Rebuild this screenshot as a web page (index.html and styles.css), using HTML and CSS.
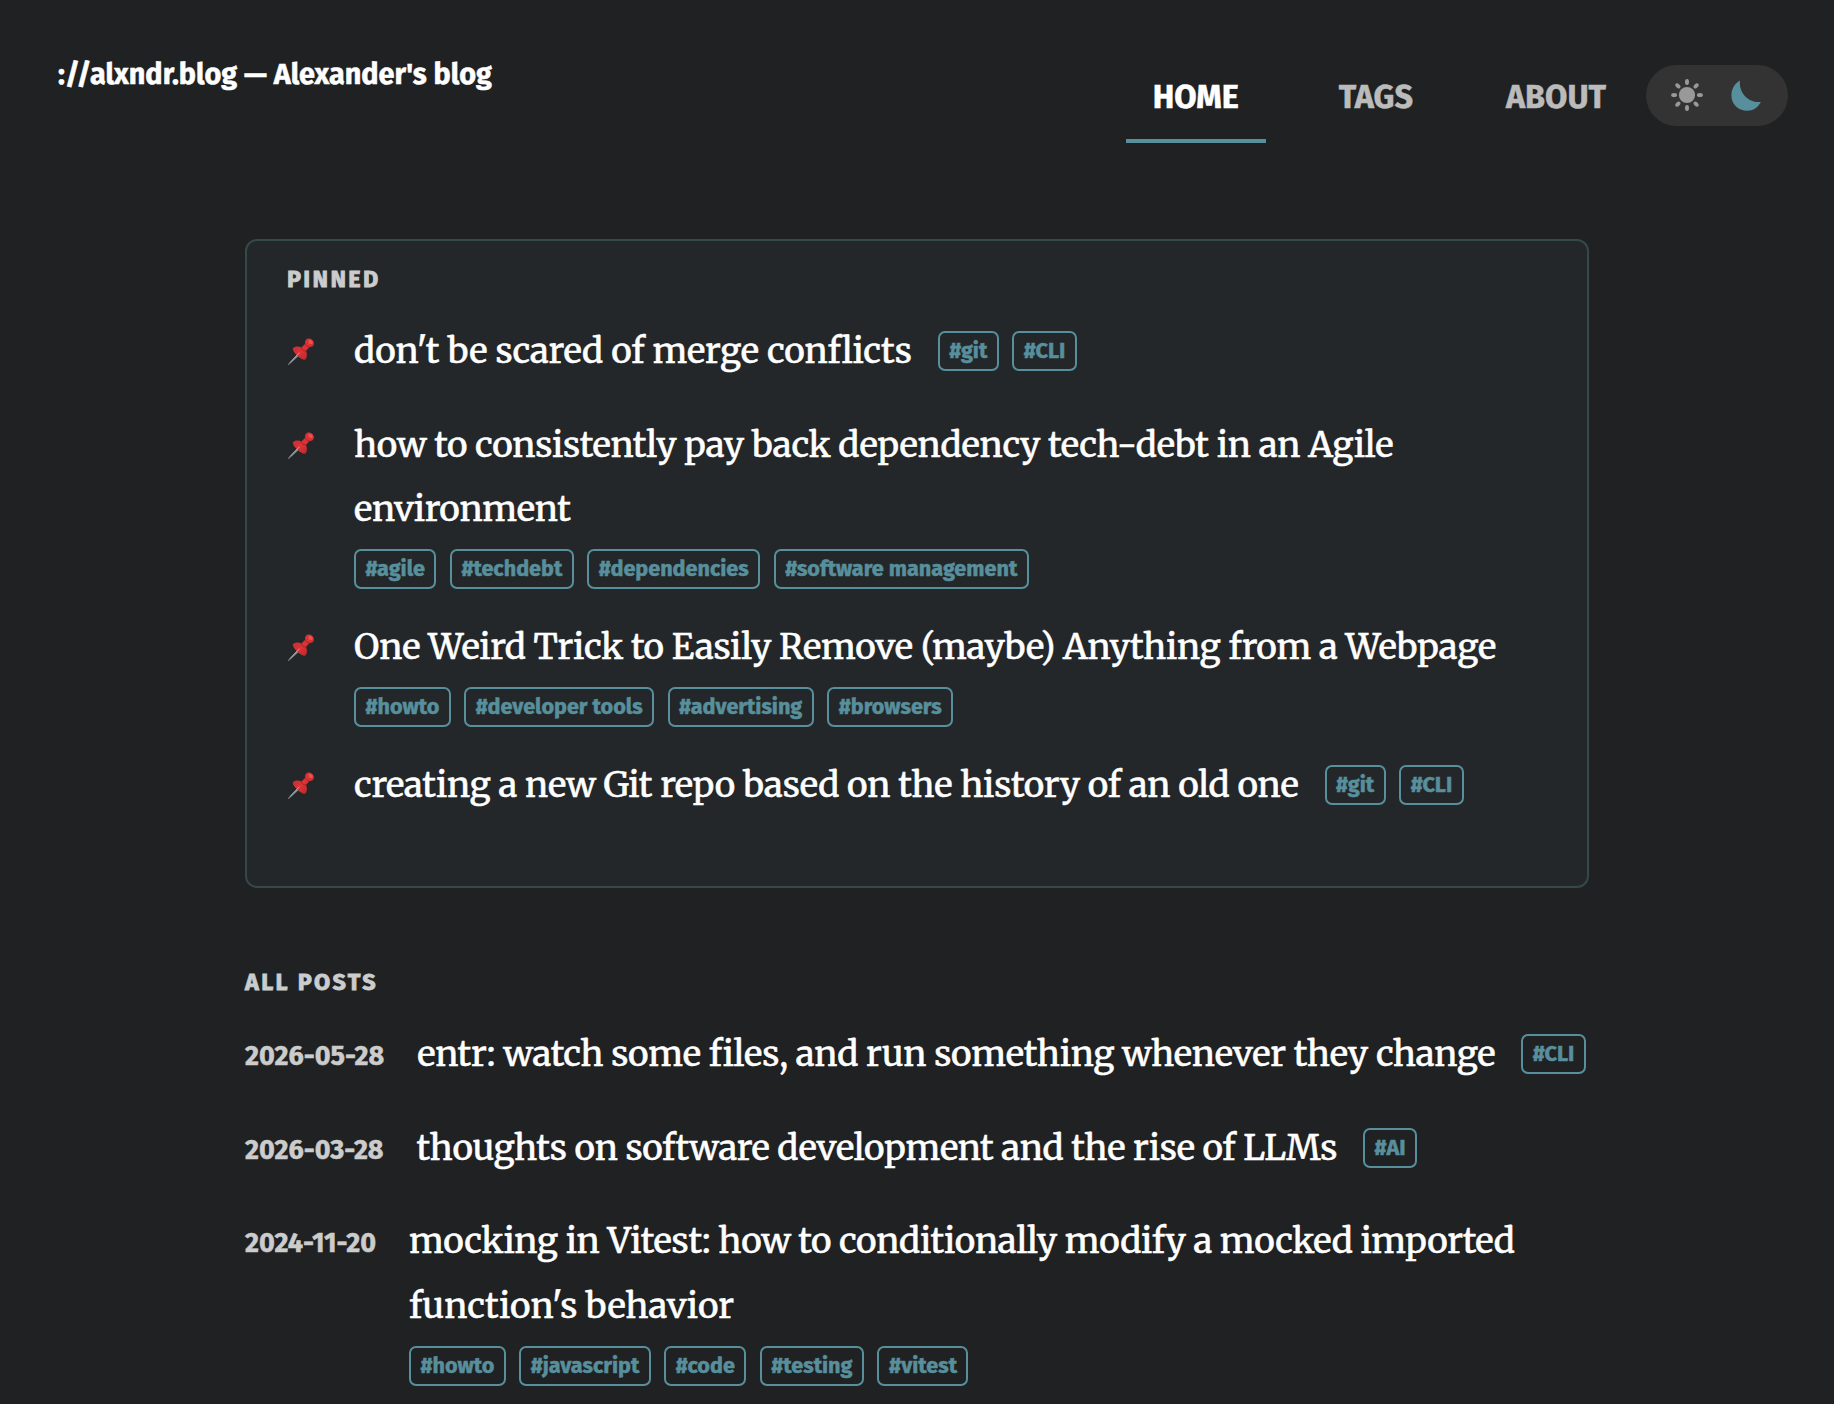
FILE: index.html
```html
<!DOCTYPE html>
<html lang="en">
<head>
<meta charset="utf-8">
<title>://alxndr.blog — Alexander's blog</title>
<link rel="stylesheet" href="styles.css">
</head>
<body>
<svg width="0" height="0" class="defs" aria-hidden="true">
  <defs>
    <linearGradient id="pinRed" x1="0" y1="0" x2="1" y2="1">
      <stop offset="0" stop-color="#b92a2e"/><stop offset=".5" stop-color="#dd3336"/><stop offset="1" stop-color="#b01f25"/>
    </linearGradient>
    <symbol id="pin" viewBox="0 0 28 28">
      <path d="M.8 26.600 11 15.600l1.600 1.600L1.600 27Z" fill="#7f8689"/>
      <path d="M5.600 10.600c1.800-2.300 5.600-2.600 8.800-1.200L18.200 5.800c-.6-2.500.4-4.700 2.800-5.300 3.200-.6 6.300 2.400 5.900 5.500-.3 2.300-2.200 3.200-4.400 3L19 12.900c1.500 3.200 1.200 6.800-.9 8.900-2.900.1-5.200-1.700-7.100-3.700-2.400-1.700-4.900-4.500-5.400-7.500Z" fill="url(#pinRed)"/>
      <path d="M14.400 9.400c0 2 1.800 3.700 4.600 3.500M18.400 5.800c.5 1.700 2.100 3 4.100 3.200" fill="none" stroke="#9a2227" stroke-width=".8"/>
      <ellipse cx="23.500" cy="3.900" rx="2.500" ry="1.800" transform="rotate(42 23.500 3.900)" fill="#ee5052"/>
      <path d="M3 24.600 12.500 14.700" stroke="#a9afb2" stroke-width="1"/>
    </symbol>
  </defs>
</svg>

<header class="site-header">
  <a class="logo">://alxndr.blog — Alexander's blog</a>
  <nav class="nav">
    <a class="nav-link active">Home</a>
    <a class="nav-link tags-link">Tags</a>
    <a class="nav-link about-link">About</a>
    <div class="theme-toggle">
      <svg class="sun" viewBox="-16 -16 32 32">
        <circle r="8.100"/>
        <g id="rays">
          <ellipse cy="-12.900" rx="2" ry="3"/><ellipse cy="12.900" rx="2" ry="3"/>
          <ellipse cx="-12.900" rx="3" ry="2"/><ellipse cx="12.900" rx="3" ry="2"/>
        </g>
        <use href="#rays" transform="rotate(45)"/>
      </svg>
      <svg class="moon" viewBox="0 0 30 31">
        <path d="M9 .4C7.600 11.500 16 23 29.800 22 27 27.800 22 30.700 16.200 30.700 7 30.700.4 24 .4 15.200.4 9 3.500 3.400 9 .4Z"/>
      </svg>
    </div>
  </nav>
</header>

<main class="content">
  <section class="pinned">
    <h2>Pinned</h2>
    <ul class="posts">
      <li>
        <svg class="pin"><use href="#pin"/></svg>
        <a class="title loose">don't be scared of merge conflicts</a>
        <div class="tags"><a>#git</a><a>#CLI</a></div>
      </li>
      <li class="stacked">
        <svg class="pin"><use href="#pin"/></svg>
        <div class="body">
          <a class="title">how to consistently pay back dependency tech-debt in an Agile<br>environment</a>
          <div class="tags"><a>#agile</a><a>#techdebt</a><a>#dependencies</a><a>#software management</a></div>
        </div>
      </li>
      <li class="stacked">
        <svg class="pin"><use href="#pin"/></svg>
        <div class="body">
          <a class="title">One Weird Trick to Easily Remove (maybe) Anything from a Webpage</a>
          <div class="tags"><a>#howto</a><a>#developer tools</a><a>#advertising</a><a>#browsers</a></div>
        </div>
      </li>
      <li>
        <svg class="pin"><use href="#pin"/></svg>
        <a class="title">creating a new Git repo based on the history of an old one</a>
        <div class="tags"><a>#git</a><a>#CLI</a></div>
      </li>
    </ul>
  </section>

  <section class="all-posts">
    <h2>All posts</h2>
    <ul class="posts">
      <li>
        <time>2026-05-28</time>
        <a class="title">entr: watch some files, and run something whenever they change</a>
        <div class="tags"><a>#CLI</a></div>
      </li>
      <li>
        <time>2026-03-28</time>
        <a class="title snug">thoughts on software development and the rise of LLMs</a>
        <div class="tags"><a>#AI</a></div>
      </li>
      <li class="stacked">
        <time>2024-11-20</time>
        <div class="body">
          <a class="title snug">mocking in Vitest: how to conditionally modify a mocked imported<br><span class="looser">function's behavior</span></a>
          <div class="tags"><a>#howto</a><a>#javascript</a><a>#code</a><a>#testing</a><a>#vitest</a></div>
        </div>
      </li>
    </ul>
  </section>
</main>
</body>
</html>
```
FILE: styles.css
```css
* { box-sizing: border-box; }

body {
  margin: 0;
  height: 1404px;
  overflow: hidden;
  background: #1f2122;
  color: #fff;
  font-family: "Fira Sans", "Noto Sans", sans-serif;
  -webkit-text-stroke: 0.5px;
}

.defs { position: absolute; }

.site-header {
  display: flex;
  justify-content: space-between;
  align-items: flex-start;
  height: 239px;
  padding: 0 46px 0 58px;
}

.logo {
  margin-top: 57px;
  font-size: 28.8px;
  line-height: 36px;
  font-weight: 700;
}

.nav { display: flex; align-items: flex-start; }

.nav-link {
  height: 94px;
  margin-top: 49px;
  padding: 29px 27px 0;
  border-bottom: 4px solid transparent;
  color: #bbb;
  font-size: 32.4px;
  line-height: 40px;
  font-weight: 700;
  text-transform: uppercase;
}
.nav-link.active { color: #fff; border-color: #588f9c; }
.tags-link { margin-left: 46px; }
.about-link { margin-left: 39px; }

.theme-toggle {
  display: flex;
  align-items: center;
  gap: 28px;
  width: 142px;
  height: 61px;
  margin: 65px 0 0 13px;
  padding-left: 25px;
  border-radius: 31px;
  background: #333;
}
.sun { width: 32px; height: 32px; margin-top: -1px; fill: #999; }
.moon { width: 30px; height: 31px; fill: #588f9c; }

.content { width: 1344px; margin: 0 auto; }

h2 {
  margin: 0;
  color: #ccc;
  font-size: 23.4px;
  line-height: 32px;
  font-weight: 700;
  letter-spacing: 2.34px;
  text-transform: uppercase;
  -webkit-text-stroke-width: 0.8px;
}

.pinned {
  height: 649px;
  padding: 22px 40px 0;
  border: 2px solid #35484a;
  border-radius: 12px;
  background: #232729;
}
.pinned .posts { margin-top: 21px; }

.all-posts { padding-top: 78px; }
.all-posts .posts { margin-top: 22px; }

.posts { margin: 0; padding: 0; list-style: none; }
.posts li { display: flex; align-items: flex-start; margin-bottom: 28.8px; }

.pin { flex: none; width: 28px; height: 28px; margin: 22px 39px 0 0; }

time {
  flex: none;
  margin-right: 33px;
  color: #ccc;
  font-size: 27px;
  line-height: 73px;
  height: 64.8px;
  font-weight: 700;
}

.title {
  display: block;
  height: 64.8px;
  padding-top: 3px;
  color: #fff;
  font: 400 35px/64.8px Merriweather, "DejaVu Serif Condensed", "DejaVu Serif", serif;
  font-feature-settings: "liga" 1;
  letter-spacing: -0.27px;
  white-space: nowrap;
}
.stacked .title { height: auto; margin-bottom: -3px; }
.all-posts .title { padding-top: 2px; }
.all-posts .stacked .title { margin-bottom: -2px; }
.title.loose { letter-spacing: -0.14px; }
.title.snug { letter-spacing: -0.33px; }
.looser { letter-spacing: 0; }

.tags { display: flex; gap: 13.5px; margin: 15px 0 0 26px; }
.all-posts .tags { margin-top: 14px; }
.stacked .tags, .all-posts .stacked .tags { height: 34.9px; margin: 9.5px 0 0; }
.tags a {
  height: 40px;
  padding: 0 9.5px;
  border: 2px solid #588f9c;
  border-radius: 7px;
  color: #588f9c;
  font-size: 21.6px;
  line-height: 37px;
  font-weight: 700;
  white-space: nowrap;
}
```
